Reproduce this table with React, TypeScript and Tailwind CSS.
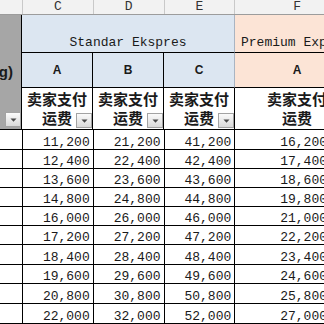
import React from "react";

const mono = "font-['Liberation_Mono',monospace]";
const cjk = "font-['Liberation_Sans','Noto_Sans_CJK_SC',sans-serif]";

// row heights of the price block, border included
const rowHeights = [20, 19, 19, 19, 19, 19, 20, 19, 20, 20];
const base = [11200, 12400, 13600, 14800, 16000, 17200, 18400, 19600, 20800, 22000];

const fmt = (n: number) => n.toLocaleString("en-US");

function FilterButton({ className = "" }: { className?: string }) {
  return (
    <span
      className={`absolute flex h-[15px] w-[16px] items-center justify-center border border-[#a3a3a3] bg-linear-to-b from-[#fbfbfb] to-[#dadada] ${className}`}
    >
      <svg width="7" height="4" viewBox="0 0 7 4">
        <path d="M0.5 0.5h6L3.5 3.8z" fill="#4a4a4a" />
      </svg>
    </span>
  );
}

function PayHeader({ filter = true }: { filter?: boolean }) {
  return (
    <div className="relative flex h-full items-center justify-center">
      <div className={`${cjk} text-center text-[15px] font-bold leading-[19px] text-[#1a1a1a]`}>
        卖家支付
        <br />
        运费
      </div>
      {filter && <FilterButton className="right-0 bottom-[1px]" />}
    </div>
  );
}

export default function App() {
  return (
    <div className="h-[324px] w-[324px] overflow-hidden bg-white">
      <div className="flex w-[359px] flex-col">
        {/* column letters */}
        <div className={`flex h-[15px] border-b border-[#9c9c9c] bg-[#f2f2f2] ${mono} text-[13px] leading-[14px] text-[#333]`}>
          <div className="w-[23px] border-r border-[#c9c9c9]" />
          {["C", "D", "E"].map((c) => (
            <div key={c} className="w-[71px] border-r border-[#c9c9c9] text-center">
              {c}
            </div>
          ))}
          <div className="w-[124px] text-center">F</div>
        </div>

        {/* table heading */}
        <div className="flex h-[115px]">
          <div className="relative flex w-[23px] items-center justify-end overflow-hidden border-r border-b border-black bg-[#a6a6a6] pr-[8px]">
            <span className={`${cjk} whitespace-nowrap text-[15px] font-bold text-[#1a1a1a]`}>重量(kg)</span>
            <FilterButton className="right-0 bottom-[2px]" />
          </div>
          <div className="flex flex-col">
            <div className="flex h-[38px]">
              <div className={`flex w-[213px] items-end justify-center border-r border-b border-r-[#a9b4c2] border-b-black bg-[#dce6f1] pb-[2px] ${mono} text-[13px] leading-[14px] text-[#1a1a1a]`}>
                Standar Ekspres
              </div>
              <div className={`flex w-[124px] items-end whitespace-nowrap border-b border-black bg-[#fce4d6] pb-[2px] pl-[6px] ${mono} text-[13px] leading-[14px] text-[#1a1a1a]`}>
                Premium Express
              </div>
            </div>
            <div className="flex h-[35px] font-['Liberation_Sans',sans-serif] text-[12px] font-bold text-[#1a1a1a]">
              {["A", "B", "C"].map((t, i) => (
                <div
                  key={t}
                  className={`flex w-[71px] items-center justify-center border-r border-b border-b-black bg-[#dce6f1] ${i === 2 ? "border-r-[#a9b4c2]" : "border-r-black"}`}
                >
                  {t}
                </div>
              ))}
              <div className="flex w-[124px] items-center justify-center border-b border-black bg-[#fce4d6]">A</div>
            </div>
            <div className="flex h-[42px]">
              {[0, 1, 2].map((i) => (
                <div key={i} className="w-[71px] border-r border-b border-black">
                  <PayHeader />
                </div>
              ))}
              <div className="w-[124px] border-b border-black">
                <PayHeader filter={false} />
              </div>
            </div>
          </div>
        </div>

        {/* price rows */}
        {base.map((c, i) => (
          <div
            key={c}
            style={{ height: rowHeights[i] }}
            className={`flex ${mono} text-[13px] leading-[13px] text-[#1a1a1a]`}
          >
            <div className="w-[23px] border-r border-b border-black" />
            {[c, c + 10000, c + 30000].map((v) => (
              <div key={v} className="flex w-[71px] items-end justify-end border-r border-b border-black pr-[3px]">
                {fmt(v)}
              </div>
            ))}
            <div className="flex w-[124px] items-end justify-end border-b border-black pr-[32px]">
              {fmt(c + 5000)}
            </div>
          </div>
        ))}
      </div>
    </div>
  );
}
